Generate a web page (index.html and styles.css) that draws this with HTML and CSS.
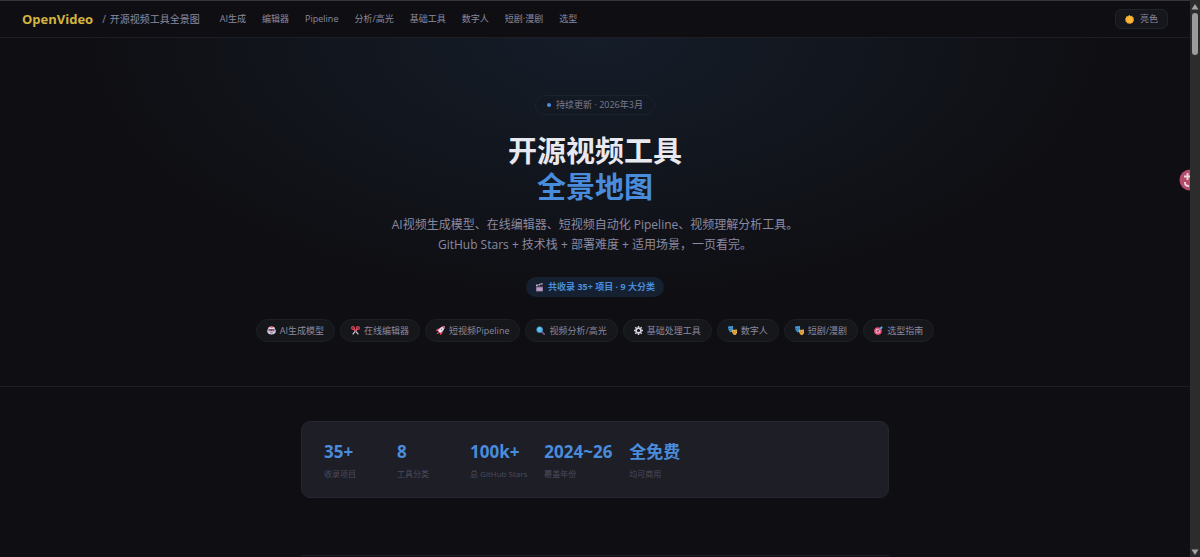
FILE: index.html
```html
<!DOCTYPE html>
<html lang="zh-CN">
<head>
<meta charset="utf-8">
<meta name="viewport" content="width=device-width, initial-scale=1">
<title>OpenVideo / 开源视频工具全景图</title>
<link rel="stylesheet" href="styles.css">
</head>
<body>
<div class="page">
  <header class="topbar">
    <a class="brand" href="#top">OpenVideo</a>
    <span class="brand-sub"><span>/</span><span>开源视频工具全景图</span></span>
    <nav class="nav">
      <a href="#ai">AI生成</a>
      <a href="#editor">编辑器</a>
      <a href="#pipeline">Pipeline</a>
      <a href="#analysis">分析/高光</a>
      <a href="#basic">基础工具</a>
      <a href="#human">数字人</a>
      <a href="#drama">短剧·漫剧</a>
      <a href="#choose">选型</a>
    </nav>
    <button class="theme" type="button">
      <svg class="icon" viewBox="0 0 16 16" aria-hidden="true"><path fill="#f2a33a" d="M8 0l2 1.600 2.600-.3.900 2.400 2.300 1.200-.5 2.600L16 10l-1.900 1.800-.3 2.500-2.600.3L9 16l-2.200-1.100-2.500.4-1.200-2.200L.8 11.800 1.200 9.200 0 7l1.800-1.900.2-2.600 2.600-.4z"/><circle cx="8" cy="8" r="5.500" fill="#ffb92f"/></svg>
      <span>亮色</span>
    </button>
  </header>

  <main id="top">
    <section class="hero">
      <div class="update"><span class="dot"></span>持续更新 · 2026年3月</div>
      <h1 class="title">开源视频工具<br><span class="title-accent">全景地图</span></h1>
      <p class="lead">AI视频生成模型、在线编辑器、短视频自动化 Pipeline、视频理解分析工具。<br>GitHub Stars + 技术栈 + 部署难度 + 适用场景，一页看完。</p>
      <div class="count">
        <svg class="icon" viewBox="0 0 16 16" aria-hidden="true"><path fill="#8e7a9c" d="M2 6h12v9H2z"/><path fill="#c9b8d4" d="M1.500 3L13 0l.8 2.800L2.300 5.800z"/><path fill="#3a3048" d="M4 2.300l2 2.400 1.800-.5-2-2.400zM8.500 1.200l2 2.300 1.800-.4-2-2.400zM2 6h12v1.200H2z"/><path fill="#b79bc6" d="M3 8.500h10v5.500H3z"/></svg>
        <span>共收录 35+ 项目 · 9 大分类</span>
      </div>
      <nav class="chips">
        <a class="chip" href="#ai"><svg class="icon" viewBox="0 0 16 16" aria-hidden="true"><path fill="#a987bd" d="M0 6h2v6H0zM14 6h2v6h-2z"/><path fill="#e3dbea" d="M2 5q0-4 6-4t6 4v7q0 3-6 3t-6-3z"/><path fill="#e05a78" d="M5 1.500q3-2 6 0V3H5z"/><path fill="#51415f" d="M3 5.500h10v4H3zM5 11.500h6v1.600H5z"/><circle cx="5.500" cy="7.500" r="1.400" fill="#e9708c"/><circle cx="10.500" cy="7.500" r="1.400" fill="#e9708c"/></svg>AI生成模型</a>
        <a class="chip" href="#editor"><svg class="icon" viewBox="0 0 16 16" aria-hidden="true"><path d="M5 5l8 10M11 5L3 15" stroke="#c9c4d2" stroke-width="2.200"/><g fill="none" stroke="#e5425c" stroke-width="2.200"><circle cx="3.500" cy="3.500" r="2.300"/><circle cx="12.500" cy="3.500" r="2.300"/><path d="M5 5l3 4 3-4"/></g></svg>在线编辑器</a>
        <a class="chip" href="#pipeline"><svg class="icon" viewBox="0 0 16 16" aria-hidden="true"><path fill="#e5425c" d="M0 9q1-5 7-5L5 9zM7 16q5-1 5-7l-5 2z"/><path fill="#e9e3f0" d="M15.500.5Q7 .5 3.500 9L7 12.500Q15.500 9 15.500.5z"/><path fill="#f04d68" d="M15.500.5l-5 .8 4.200 4.200z"/><circle cx="10" cy="6" r="1.400" fill="#4b93d9"/><path fill="#f04d68" d="M3.500 10L6 12.500 1 15z"/></svg>短视频Pipeline</a>
        <a class="chip" href="#analysis"><svg class="icon" viewBox="0 0 16 16" aria-hidden="true"><path d="M10 10l4.500 4.500" stroke="#76568d" stroke-width="3" stroke-linecap="round"/><circle cx="6.500" cy="6.500" r="5.200" fill="#56b9ed" stroke="#4596c9" stroke-width="1.200"/><path d="M4 6q.5-2 2.500-2" fill="none" stroke="#c4eaff"/></svg>视频分析/高光</a>
        <a class="chip" href="#basic"><svg class="icon" viewBox="0 0 16 16" aria-hidden="true"><circle cx="8" cy="8" r="4.300" fill="none" stroke="#d9d3e2" stroke-width="3"/><path d="M8 0v3M8 13v3M0 8h3M13 8h3M2.300 2.300l2.200 2.200M11.500 11.500l2.200 2.200M13.700 2.300l-2.200 2.200M4.500 11.500l-2.200 2.200" stroke="#d9d3e2" stroke-width="2.600"/></svg>基础处理工具</a>
        <a class="chip" href="#human"><svg class="icon" viewBox="0 0 16 16" aria-hidden="true"><path fill="#489edc" d="M0 1l9-1v8q-2 4-5 3Q0 8 0 1z"/><path fill="#f7b94a" d="M7 7l9-1q1 8-3 10-6 0-6-9z"/><path d="M2 4.500h2M6 4h2M3 8.500q1.500-1.500 3-.5" fill="none" stroke="#193e63" stroke-width="1.200"/><path d="M9 9h2M13 9h2M9.500 12q2 1.500 4-.5" fill="none" stroke="#81451e" stroke-width="1.200"/></svg>数字人</a>
        <a class="chip" href="#drama"><svg class="icon" viewBox="0 0 16 16" aria-hidden="true"><path fill="#489edc" d="M0 1l9-1v8q-2 4-5 3Q0 8 0 1z"/><path fill="#f7b94a" d="M7 7l9-1q1 8-3 10-6 0-6-9z"/><path d="M2 4.500h2M6 4h2M3 8.500q1.500-1.500 3-.5" fill="none" stroke="#193e63" stroke-width="1.200"/><path d="M9 9h2M13 9h2M9.500 12q2 1.500 4-.5" fill="none" stroke="#81451e" stroke-width="1.200"/></svg>短剧/漫剧</a>
        <a class="chip" href="#choose"><svg class="icon" viewBox="0 0 16 16" aria-hidden="true"><circle cx="7" cy="9" r="6.800" fill="#e64f79"/><circle cx="7" cy="9" r="4.300" fill="#efc5d6"/><circle cx="7" cy="9" r="2.800" fill="#e64f79"/><path d="M7 9l6-6" stroke="#456d9c" stroke-width="1.500"/><path fill="#55b2e8" d="M10.500 3L14 0l.3 2 1.700.2-3 3.500-2.500-.2z"/></svg>选型指南</a>
      </nav>
    </section>

    <section class="overview">
      <dl class="stats">
        <div class="stat"><dt>收录项目</dt><dd>35+</dd></div>
        <div class="stat"><dt>工具分类</dt><dd>8</dd></div>
        <div class="stat"><dt>总 GitHub Stars</dt><dd>100k+</dd></div>
        <div class="stat"><dt>覆盖年份</dt><dd>2024~26</dd></div>
        <div class="stat"><dt>均可商用</dt><dd>全免费</dd></div>
      </dl>
      <hr class="rule">
    </section>
  </main>
  <button class="float" type="button" aria-label="翻译">
    <svg viewBox="0 0 22 22" aria-hidden="true"><circle cx="11" cy="11" r="10.500" fill="#b34c69"/><path d="M8.500 4v7M5 7.500h7M6 13v1q0 3 4 3" fill="none" stroke="#efd5de" stroke-width="1.800"/></svg>
  </button>
</div>
<div class="scrollbar" aria-hidden="true">
  <svg class="arrow" viewBox="0 0 8 6"><path fill="#a3a3a3" d="M4 0l3.500 5.500h-7z"/></svg>
  <span class="thumb"></span>
  <svg class="arrow arrow-down" viewBox="0 0 8 6"><path fill="#a3a3a3" d="M.5 .5h7L4 6z"/></svg>
</div>
</body>
</html>
```
FILE: styles.css
```css
* { box-sizing: border-box; }

body {
  margin: 0;
  min-height: 100vh;
  display: flex;
  background: #0f0f13;
  color: #8b89a0;
  font-family: "Open Sans", "Noto Sans CJK SC", sans-serif;
  font-size: 9px;
  line-height: 14px;
}

a { color: inherit; text-decoration: none; }

button { font: inherit; color: inherit; cursor: pointer; }

.page {
  position: relative;
  flex: 1;
  min-width: 0;
  overflow: hidden;
}

.icon { width: 9px; height: 9px; flex: none; }

.topbar {
  display: flex;
  align-items: center;
  height: 38px;
  padding: 0 22px;
  border-top: 1px solid #35363a;
  border-bottom: 1px solid #1d1e25;
}

.brand {
  color: #d3b440;
  font-size: 13px;
  font-weight: 700;
  margin-right: 9px;
}

.brand-sub {
  display: flex;
  gap: 4px;
  font-size: 10px;
}

.nav {
  display: flex;
  gap: 16px;
  margin-left: 20px;
}

.theme {
  display: flex;
  align-items: center;
  gap: 6px;
  height: 20px;
  margin-left: auto;
  padding: 0 9px;
  border: 1px solid #20232a;
  border-radius: 6px;
  background: #15171c;
}

.hero {
  display: flex;
  flex-direction: column;
  align-items: center;
  padding: 57px 24px 44px;
  border-bottom: 1px solid #1d1e25;
  background: radial-gradient(ellipse 43% 75% at 50% 0%, #151d29, #0f0f13);
  text-align: center;
}

.update {
  display: flex;
  align-items: center;
  gap: 5px;
  height: 20px;
  padding: 0 11px;
  border: 1px solid #1c222c;
  border-radius: 10px;
  color: #7d7c8f;
}

.dot {
  width: 4px;
  height: 4px;
  border-radius: 50%;
  background: #4a90e2;
}

.title {
  margin: 18px 0 10px;
  color: #e8e8f0;
  font-size: 29px;
  font-weight: 700;
  line-height: 36px;
}

.title-accent { color: #4a8cdc; }

.lead {
  margin: 0;
  font-size: 12px;
  line-height: 20px;
}

.count {
  display: flex;
  align-items: center;
  gap: 4px;
  height: 20px;
  margin: 22px 0;
  padding: 0 9px;
  border-radius: 10px;
  background: #152130;
  color: #4a8cdc;
  font-weight: 700;
}

.chips {
  display: flex;
  flex-wrap: wrap;
  justify-content: center;
  gap: 5px;
}

.chip {
  display: flex;
  align-items: center;
  gap: 4px;
  height: 23px;
  padding: 0 10px;
  border: 1px solid #1d2026;
  border-radius: 12px;
  background: #15171b;
}

.overview {
  max-width: 588px;
  margin: 0 auto;
  padding-top: 34px;
}

.stats {
  display: flex;
  flex-wrap: wrap;
  gap: 17px;
  margin: 0 0 57px;
  padding: 18px 22px 16px;
  border: 1px solid #23252f;
  border-radius: 9px;
  background: #1e1e27;
}

.stat {
  display: flex;
  flex-direction: column-reverse;
  gap: 3px;
  min-width: 56px;
}

.stat dt {
  color: #4d4c5b;
  font-size: 8px;
  line-height: 14px;
}

.stat dd {
  margin: 0;
  color: #4a8cdc;
  font-size: 17px;
  font-weight: 700;
  line-height: 24px;
}

.rule {
  margin: 0;
  border: 0;
  border-top: 1px solid #1d1e25;
}

.float {
  position: absolute;
  top: 169px;
  right: -11px;
  width: 22px;
  height: 22px;
  padding: 0;
  border: 0;
  border-radius: 50%;
  background: none;
}

.float svg { display: block; }

.scrollbar {
  display: flex;
  flex-direction: column;
  align-items: center;
  width: 10px;
  padding: 4px 0 2px;
  background: #2c2c2c;
}

.arrow { width: 8px; height: 6px; }

.arrow-down { margin-top: auto; }

.thumb {
  width: 6px;
  height: 42px;
  margin-top: 3px;
  border-radius: 3px;
  background: #9b9b9b;
}
```
